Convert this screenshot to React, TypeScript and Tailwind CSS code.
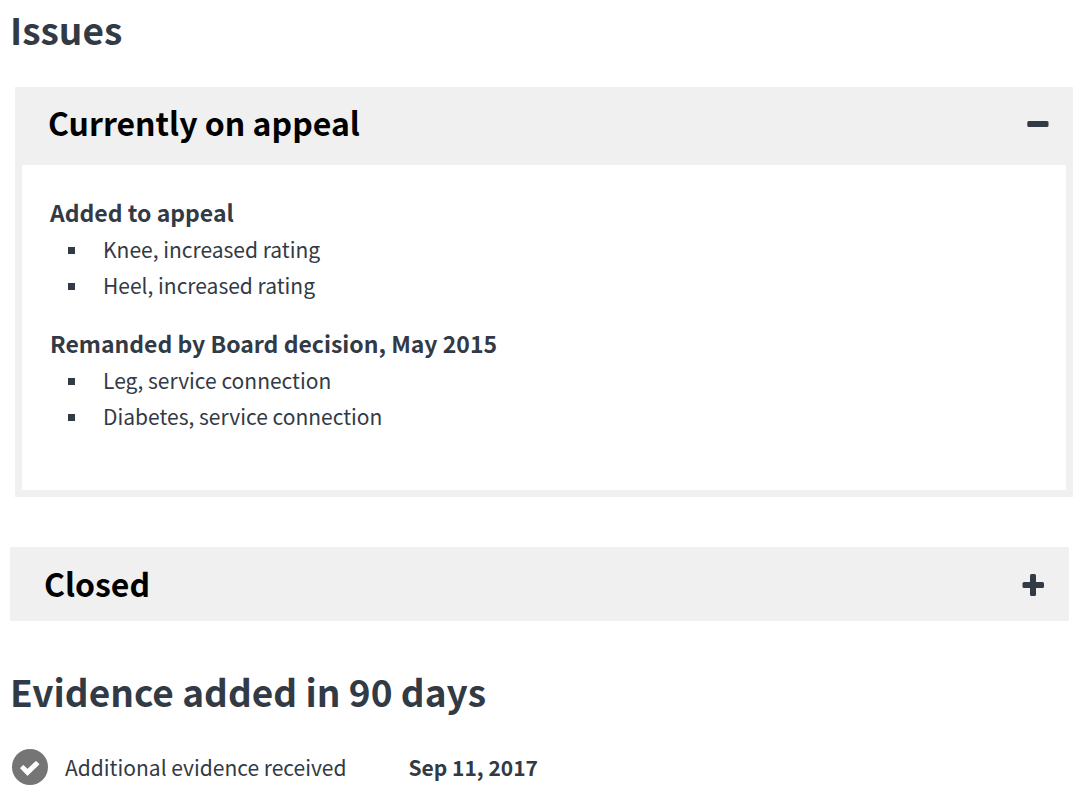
import React from "react";

type Group = { title: string; items: string[] };

const groups: Group[] = [
  { title: "Added to appeal", items: ["Knee, increased rating", "Heel, increased rating"] },
  { title: "Remanded by Board decision, May 2015", items: ["Leg, service connection", "Diabetes, service connection"] },
];

function Minus() {
  return (
    <svg aria-hidden="true" viewBox="0 0 22 22" className="mt-1 size-[22px] fill-[#323a45]">
      <rect x="0.3" y="8" width="21.2" height="6" rx="1.5" />
    </svg>
  );
}

function Plus() {
  return (
    <svg aria-hidden="true" viewBox="0 0 22 22" className="mt-1 size-[22px] fill-[#323a45]">
      <rect x="0.5" y="8" width="21.5" height="6" rx="1.5" />
      <rect x="8" y="0" width="6" height="22" rx="1.5" />
    </svg>
  );
}

export default function App() {
  return (
    <main className="bg-white pl-[10px] pr-[15px] pt-[5px] font-['Noto_Sans_CJK_SC','Noto_Sans',sans-serif] text-[#323a45]">
      <h2 className="text-[37px] font-bold leading-[48px]">Issues</h2>

      <section className="ml-[5px] mt-[34px] bg-[#f0f0f0] px-[7px] pb-[7px]">
        <h3>
          <button type="button" aria-expanded="true" className="flex w-full items-center justify-between pb-[23px] pl-[26px] pr-[17px] pt-[15px] text-left text-[32px] font-bold leading-[40px] text-black">
            Currently on appeal
            <Minus />
          </button>
        </h3>
        <div className="bg-white px-7 pb-[56px] pt-[29px]">
          {groups.map((group) => (
            <div key={group.title} className="mb-[22px] last:mb-0">
              <h4 className="mb-px text-[23px] font-bold leading-[36px]">{group.title}</h4>
              <ul>
                {group.items.map((item) => (
                  <li key={item} className="flex items-center text-[21px] leading-[36px]">
                    <span className="ml-[18px] mr-7 mt-[3px] size-[7px] bg-[#323a45]" />
                    {item}
                  </li>
                ))}
              </ul>
            </div>
          ))}
        </div>
      </section>

      <section className="mr-1 mt-[50px] bg-[#f0f0f0]">
        <h3>
          <button type="button" aria-expanded="false" className="flex w-full items-center justify-between pb-[18px] pl-[34px] pr-[25px] pt-4 text-left text-[32px] font-bold leading-[40px] text-black">
            Closed
            <Plus />
          </button>
        </h3>
      </section>

      <h2 className="mt-[46px] text-[37px] font-bold leading-[48px]">Evidence added in 90 days</h2>
      <div className="mt-[34px] flex items-center pl-[2px] text-[21px] leading-[36px]">
        <svg aria-hidden="true" viewBox="0 0 36 36" className="mr-[17px] size-9">
          <circle cx="18" cy="18" r="18" fill="#757575" />
          <path d="M8.800 19.200L11.300 16.700 15.500 20.700 24 12.600 26.600 15.200 15.500 26z" fill="#fff" stroke="#fff" strokeWidth="1.2" strokeLinejoin="round" />
        </svg>
        <p>Additional evidence received</p>
        <strong className="ml-[62px] font-bold">Sep 11, 2017</strong>
      </div>
    </main>
  );
}
